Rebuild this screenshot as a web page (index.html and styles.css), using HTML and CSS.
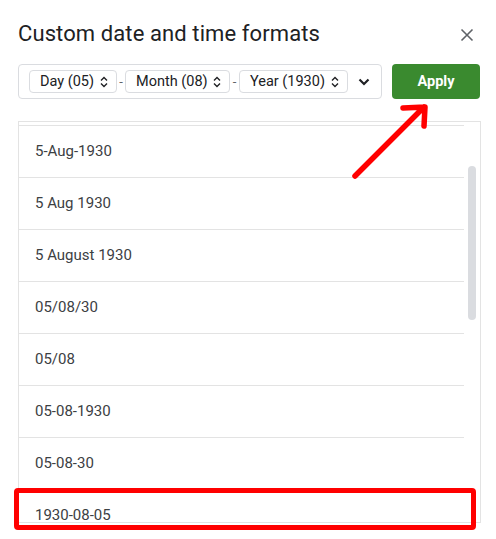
FILE: index.html
```html
<!DOCTYPE html>
<html>
<head>
<meta charset="utf-8">
<link rel="stylesheet" href="styles.css">
</head>
<body>
<div class="dialog">
  <div class="header">
    <h1 class="title">Custom date and time formats</h1>
    <svg class="close" width="14" height="14" viewBox="0 0 14 14"><path d="M1.5 1.5 L12.5 12.5 M12.5 1.5 L1.5 12.5" stroke="#5f6368" stroke-width="1.6" fill="none"/></svg>
  </div>
  <div class="toolbar">
    <div class="formats">
      <div class="chip chip-day"><span>Day (05)</span><svg width="8" height="14" viewBox="0 0 8 14"><path d="M1 5.5 L4 2.5 L7 5.5 M1 8.5 L4 11.5 L7 8.5" stroke="#202124" stroke-width="1.4" fill="none"/></svg></div>
      <span class="sep">-</span>
      <div class="chip chip-month"><span>Month (08)</span><svg width="8" height="14" viewBox="0 0 8 14"><path d="M1 5.5 L4 2.5 L7 5.5 M1 8.5 L4 11.5 L7 8.5" stroke="#202124" stroke-width="1.4" fill="none"/></svg></div>
      <span class="sep sep-wide">-</span>
      <div class="chip chip-year"><span>Year (1930)</span><svg width="8" height="14" viewBox="0 0 8 14"><path d="M1 5.5 L4 2.5 L7 5.5 M1 8.5 L4 11.5 L7 8.5" stroke="#202124" stroke-width="1.4" fill="none"/></svg></div>
      <svg class="more" width="12" height="8" viewBox="0 0 12 8"><path d="M1.5 1.5 L6 6 L10.5 1.5" stroke="#202124" stroke-width="2.2" fill="none"/></svg>
    </div>
    <button class="apply">Apply</button>
  </div>
  <div class="list">
    <div class="spacer"></div>
    <div class="row">5-Aug-1930</div>
    <div class="row">5 Aug 1930</div>
    <div class="row">5 August 1930</div>
    <div class="row">05/08/30</div>
    <div class="row">05/08</div>
    <div class="row">05-08-1930</div>
    <div class="row">05-08-30</div>
    <div class="row">1930-08-05</div>
    <div class="scrollbar"></div>
  </div>
</div>
<div class="highlight"></div>
<svg class="arrow" width="90" height="90" viewBox="0 0 90 90"><path d="M5 85 L74 16 M53 17 L75 16 L74 35" stroke="#ff0000" stroke-width="5.5" stroke-linecap="round" stroke-linejoin="round" fill="none"/></svg>
</body>
</html>
```
FILE: styles.css
```css
* { box-sizing: border-box; }
body {
  margin: 0;
  background: #fff;
  font-family: Roboto, "Noto Sans", sans-serif;
  color: #202124;
  width: 496px;
  height: 539px;
  overflow: hidden;
  position: relative;
}
.dialog {
  padding: 20px 0 0 18px;
}
.header {
  display: flex;
  align-items: center;
  justify-content: space-between;
  height: 28px;
  width: 456px;
}
.title {
  margin: 0;
  font-size: 22px;
  line-height: 28px;
  font-weight: 400;
  color: #202124;
  letter-spacing: 0.1px;
}
.close { margin-top: 2px; }
.toolbar {
  margin-top: 16px;
  display: flex;
  gap: 10px;
}
.formats {
  width: 364px;
  height: 35px;
  border: 1px solid #dadce0;
  border-radius: 4px;
  padding-left: 10px;
  display: flex;
  align-items: center;
}
.chip {
  height: 23px;
  border: 1px solid #dadce0;
  border-radius: 4px;
  display: flex;
  align-items: center;
  justify-content: space-between;
  padding: 0 8px 0 10px;
  font-size: 14.5px;
  color: #202124;
}
.chip-day { width: 88px; }
.chip-month { width: 105px; }
.chip-year { width: 109px; }
.sep {
  width: 8px;
  text-align: center;
  font-size: 13px;
  color: #5f6368;
}
.sep-wide { width: 9px; }
.more { margin-left: 10px; }
.apply {
  width: 88px;
  height: 35px;
  border: none;
  border-radius: 4px;
  background: #3a8a2f;
  color: #fff;
  font-family: Roboto, "Noto Sans", sans-serif;
  font-size: 14.5px;
  font-weight: 700;
  padding: 0;
}
.list {
  margin-top: 22px;
  width: 463px;
  height: 402px;
  border: 1px solid #e3e3e3;
  overflow: hidden;
  position: relative;
}
.spacer {
  width: 445px;
  height: 4px;
  border-bottom: 1px solid #e3e3e3;
}
.row {
  width: 445px;
  height: 52px;
  border-bottom: 1px solid #e3e3e3;
  padding-left: 16px;
  padding-bottom: 1px;
  display: flex;
  align-items: center;
  font-size: 15px;
  color: #3c4043;
}
.scrollbar {
  position: absolute;
  left: 449px;
  top: 44px;
  width: 8px;
  height: 154px;
  border-radius: 4px;
  background: #dadce0;
}
.highlight {
  position: absolute;
  left: 14px;
  top: 488px;
  width: 462px;
  height: 42px;
  border: 5px solid #ff0000;
  border-radius: 4px;
}
.arrow {
  position: absolute;
  left: 350px;
  top: 91px;
}
```
